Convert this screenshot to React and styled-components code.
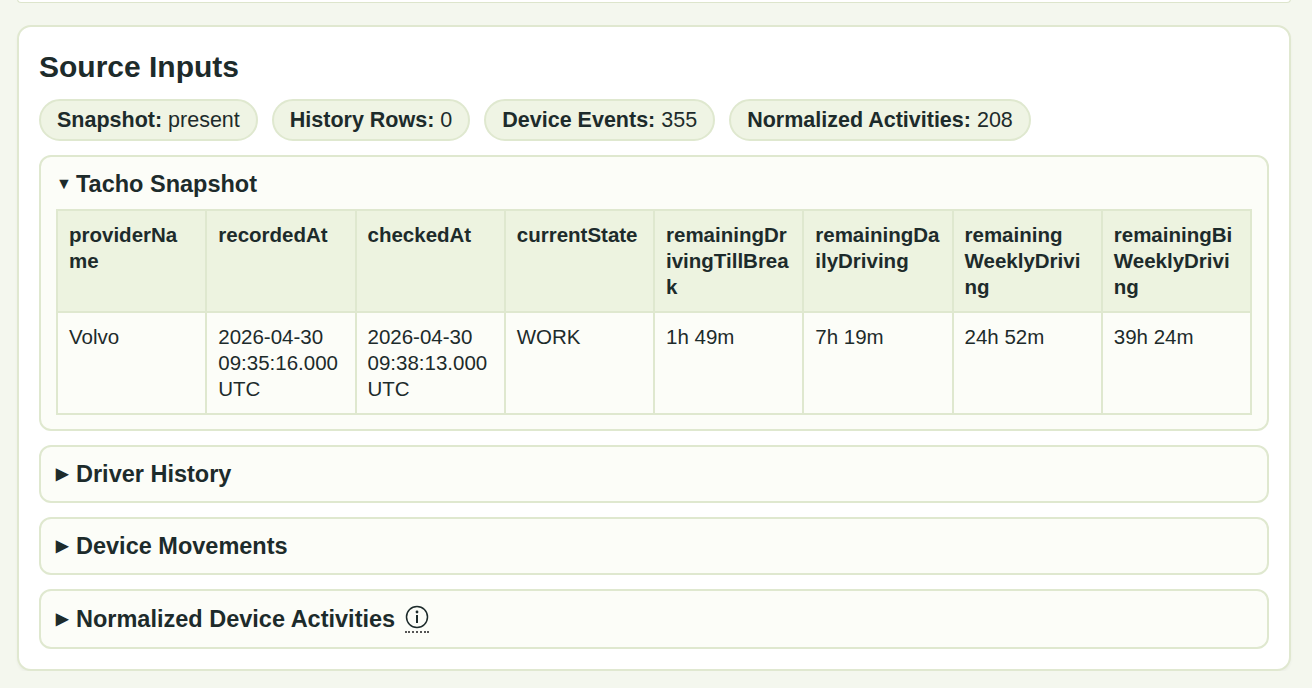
import React from "react";
import styled, { createGlobalStyle } from "styled-components";

const G = createGlobalStyle`
  html,body{margin:0;padding:0;background:#f4f7ee;font-family:"Liberation Sans",Arial,sans-serif;color:#1d2b2b;}
`;
const Page = styled.div`padding:0 21px 0 17px;display:flex;flex-direction:column;gap:22px;`;
const TopCard = styled.div`height:3px;margin-top:-1px;border:1px solid #dde5cc;border-top:none;border-radius:0 0 12px 12px;background:#fff;`;
const Card = styled.div`background:#fff;border:2px solid #e0e8d0;border-radius:14px;padding:22px 20px 20px;display:flex;flex-direction:column;gap:14px;box-shadow:0 2px 3px rgba(0,0,0,0.04);`;
const H = styled.h2`margin:0;font-size:30px;font-weight:700;line-height:36px;`;
const Pills = styled.div`display:flex;gap:14px;margin-top:0;`;
const Pill = styled.div`border:2px solid #dfe8cf;background:#eff4e4;border-radius:22px;padding:0 16px;height:38px;display:flex;align-items:center;font-size:21.5px;b{font-weight:700;}`;
const Box = styled.div`border:2px solid #dfe8cf;background:#fcfdf8;border-radius:12px;padding:${p=>p.open?"14px 15px 14px":"14px 15px"};`;
const Sum = styled.div`font-size:23.5px;font-weight:700;line-height:26px;display:flex;align-items:center;gap:6px;`;
const Tri = styled.span`font-size:16px;width:14px;display:inline-block;`;
const Table = styled.table`margin-top:12px;width:100%;border-collapse:collapse;table-layout:fixed;font-size:20.5px;line-height:26px;
  th,td{border:2px solid #dfe8cf;padding:11px 11px 11px;text-align:left;vertical-align:top;overflow-wrap:anywhere;}
  th{background:#edf3e0;font-weight:700;}`;
const Info = styled.span`font-weight:400;border-bottom:2px dotted #555;display:inline-flex;padding-bottom:2px;margin-left:4px;`;

const heads=["providerName","recordedAt","checkedAt","currentState","remainingDrivingTillBreak","remainingDailyDriving",<>remaining<wbr/>WeeklyDriving</>,"remainingBiWeeklyDriving"];
const row=["Volvo","2026-04-30 09:35:16.000 UTC","2026-04-30 09:38:13.000 UTC","WORK","1h 49m","7h 19m","24h 52m","39h 24m"];

export default function App(){
  return <><G/><Page>
    <TopCard/>
    <Card>
      <H>Source Inputs</H>
      <Pills>
        <Pill><b>Snapshot:</b>&nbsp;present</Pill>
        <Pill><b>History Rows:</b>&nbsp;0</Pill>
        <Pill><b>Device Events:</b>&nbsp;355</Pill>
        <Pill><b>Normalized Activities:</b>&nbsp;208</Pill>
      </Pills>
      <Box open>
        <Sum><Tri>▼</Tri>Tacho Snapshot</Sum>
        <Table><thead><tr>{heads.map((h,i)=><th key={i}>{h}</th>)}</tr></thead>
        <tbody><tr>{row.map((c,i)=><td key={i}>{c}</td>)}</tr></tbody></Table>
      </Box>
      <Box><Sum><Tri>▶</Tri>Driver History</Sum></Box>
      <Box><Sum><Tri>▶</Tri>Device Movements</Sum></Box>
      <Box><Sum><Tri>▶</Tri>Normalized Device Activities<Info>
        <svg width="24" height="24" viewBox="0 0 24 24"><circle cx="12" cy="12" r="10.5" fill="none" stroke="#1d2b2b" strokeWidth="1.5"/><circle cx="12" cy="7" r="1.4" fill="#1d2b2b"/><rect x="11" y="10" width="2" height="8" fill="#1d2b2b"/></svg>
      </Info></Sum></Box>
    </Card>
  </Page></>;
}
